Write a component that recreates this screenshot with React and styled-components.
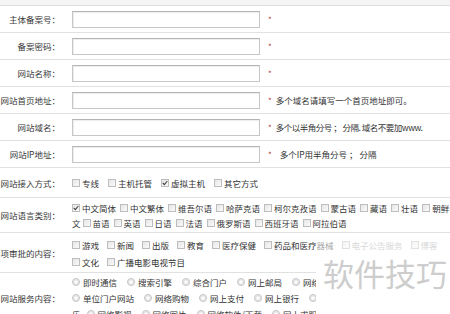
import React from 'react';
import styled, { createGlobalStyle } from 'styled-components';

const GlobalStyle = createGlobalStyle`
  body {
    margin: 0;
    overflow: hidden;
    background: #fff;
    color: #333;
    font-family: "Noto Sans CJK SC", "Noto Sans", sans-serif;
    font-size: 8.5px;
  }
`;

const Page = styled.div`
  position: relative;
  width: 450px;
  height: 314px;
  overflow: hidden;
`;

const TopStrip = styled.div`
  height: 6px;
  box-sizing: border-box;
  background: #f4f4f4;
  border-bottom: 1px solid #dedede;
`;

const Row = styled.div`
  display: flex;
  align-items: center;
  height: ${(p) => p.h}px;
  box-sizing: border-box;
  border-bottom: ${(p) => (p.last ? 'none' : '1px solid #e1e1e1')};
`;

const Label = styled.div`
  flex: none;
  width: 60px;
  display: flex;
  justify-content: flex-end;
  white-space: nowrap;
  color: #383838;
`;

const Value = styled.div`
  flex: 1;
  display: flex;
  align-items: center;
  margin-left: 12px;
  min-width: 0;
`;

const TextInput = styled.input`
  width: 188px;
  height: 17px;
  box-sizing: border-box;
  margin: 0;
  border: 1px solid #c6c6c6;
  border-top-color: #b4b4b4;
  box-shadow: inset 1px 1px 1px #ededed;
  background: #fff;
  outline: none;
`;

const Star = styled.span`
  margin-left: 8px;
  color: #b03a3a;
  font-size: 8px;
`;

const Hint = styled.span`
  margin-left: ${(p) => p.gap}px;
  letter-spacing: ${(p) => p.ls || 0}px;
  white-space: nowrap;
  color: #333;
`;

const Options = styled.div`
  display: flex;
  flex-direction: column;
  padding-top: ${(p) => p.pt || 0}px;
`;

const Line = styled.div`
  display: flex;
  align-items: center;
  height: ${(p) => p.lh}px;
  white-space: nowrap;
`;

const Option = styled.span`
  display: inline-flex;
  align-items: center;
  margin-right: ${(p) => p.m}px;
  color: ${(p) => (p.faded ? '#a8a8a8' : '#333')};
`;

const Fragment = styled.span`
  margin-right: ${(p) => p.m}px;
`;

const Box = styled.span`
  width: 8px;
  height: 8px;
  box-sizing: border-box;
  margin-right: 2px;
  border: 1px solid #bdbdbd;
  background: linear-gradient(135deg, #e6e6e6, #fafafa);
  display: inline-flex;
  align-items: center;
  justify-content: center;
`;

const Radio = styled.span`
  width: 8px;
  height: 8px;
  box-sizing: border-box;
  margin-right: 3px;
  border: 1px solid #c2c2c2;
  border-radius: 50%;
  background: #fff;
  box-shadow: inset 0 0 0 1.5px #e6e6e6;
`;

const Watermark = styled.div`
  position: absolute;
  left: 316px;
  top: 236px;
  right: 0;
  bottom: 0;
  background: linear-gradient(
    to bottom,
    rgba(255, 255, 255, 0.55) 0,
    rgba(255, 255, 255, 0.55) 26px,
    #fff 26px
  );
`;

const WatermarkText = styled.div`
  margin-top: 21px;
  padding-left: 7px;
  font-size: 31px;
  line-height: 31px;
  color: #cdcdcd;
  white-space: nowrap;
`;

const Check = () => (
  <svg width="6" height="6" viewBox="0 0 6 6">
    <path d="M0.8 3 L2.4 4.6 L5.3 1" fill="none" stroke="#444" strokeWidth="1.1" />
  </svg>
);

const CheckItem = ({ text, checked, m, faded }) => (
  <Option m={m} faded={faded}>
    <Box>{checked && <Check />}</Box>
    {text}
  </Option>
);

const RadioItem = ({ text }) => (
  <Option m={10}>
    <Radio />
    {text}
  </Option>
);

const inputRows = [
  { label: '主体备案号：' },
  { label: '备案密码：' },
  { label: '网站名称：' },
  { label: '网站首页地址：', hint: '多个域名请填写一个首页地址即可。', gap: 4 },
  { label: '网站域名：', hint: '多个以半角分号 ； 分隔. 域名不要加www.', gap: 4, ls: -0.5 },
  { label: '网站IP地址：', hint: '多个IP用半角分号 ； 分隔', gap: 8 },
];

const access = [
  { text: '专线' },
  { text: '主机托管' },
  { text: '虚拟主机', checked: true },
  { text: '其它方式' },
];

const langLine1 = ['中文简体', '中文繁体', '维吾尔语', '哈萨克语', '柯尔克孜语', '蒙古语', '藏语', '壮语', '朝鲜语'];
const langLine2 = ['苗语', '英语', '日语', '法语', '俄罗斯语', '西班牙语', '阿拉伯语'];

const contentLine1 = ['游戏', '新闻', '出版', '教育', '医疗保健', '药品和医疗器械'];
const contentLine2 = ['文化', '广播电影电视节目'];

// the right part of these two lines is hidden behind the watermark
const serviceLines = [
  ['即时通信', '搜索引擎', '综合门户', '网上邮局', '网络'],
  ['单位门户网站', '网络购物', '网上支付', '网上银行', ''],
];
const serviceLine3 = ['网络影视', '网络图片', '网络软件/下载', '网上求职'];

const App = () => (
  <>
    <GlobalStyle />
    <Page>
      <TopStrip />
      {inputRows.map((r) => (
        <Row h={27} key={r.label}>
          <Label>{r.label}</Label>
          <Value>
            <TextInput />
            <Star>*</Star>
            {r.hint && (
              <Hint gap={r.gap} ls={r.ls}>
                {r.hint}
              </Hint>
            )}
          </Value>
        </Row>
      ))}

      <Row h={30}>
        <Label>网站接入方式：</Label>
        <Value>
          <Line lh={15}>
            {access.map((a) => (
              <CheckItem key={a.text} text={a.text} checked={a.checked} m={9} />
            ))}
          </Line>
        </Value>
      </Row>

      <Row h={35}>
        <Label>网站语言类别：</Label>
        <Value>
          <Options pt={1}>
            <Line lh={15}>
              {langLine1.map((t, i) => (
                <CheckItem key={t} text={t} checked={i === 0} m={4} />
              ))}
            </Line>
            <Line lh={15}>
              <Fragment m={2}>文</Fragment>
              {langLine2.map((t) => (
                <CheckItem key={t} text={t} m={4} />
              ))}
            </Line>
          </Options>
        </Value>
      </Row>

      <Row h={40}>
        <Label>专项审批的内容：</Label>
        <Value>
          <Options pt={1}>
            <Line lh={17}>
              {contentLine1.map((t) => (
                <CheckItem key={t} text={t} m={8} />
              ))}
              <CheckItem text="电子公告服务" m={8} faded />
              <CheckItem text="博客" m={8} faded />
            </Line>
            <Line lh={17}>
              {contentLine2.map((t) => (
                <CheckItem key={t} text={t} m={8} />
              ))}
            </Line>
          </Options>
        </Value>
      </Row>

      <Row h={50} last>
        <Label>网站服务内容：</Label>
        <Value>
          <Options>
            {serviceLines.map((line, i) => (
              <Line lh={16} key={i}>
                {line.map((t, j) => (
                  <RadioItem key={j} text={t} />
                ))}
              </Line>
            ))}
            <Line lh={16}>
              <Fragment m={6}>乐</Fragment>
              {serviceLine3.map((t) => (
                <RadioItem key={t} text={t} />
              ))}
            </Line>
          </Options>
        </Value>
      </Row>

      <Watermark>
        <WatermarkText>软件技巧</WatermarkText>
      </Watermark>
    </Page>
  </>
);

export default App;
